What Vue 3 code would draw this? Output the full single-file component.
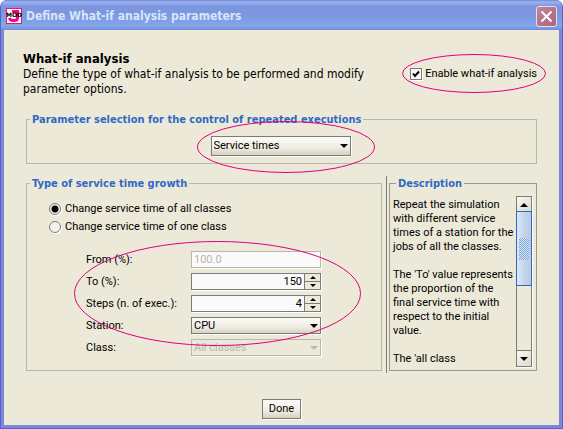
<script setup>
import { ref } from 'vue'

const enabled = ref(true)
const parameter = ref('Service times')
const scope = ref('all')
const from = ref('100.0')
const to = ref(150)
const steps = ref(4)
const station = ref('CPU')
const classes = ref('All classes')
const description = [
  'Repeat the simulation',
  'with different service',
  'times of a station for the',
  'jobs of all the classes.',
  '',
  "The 'To' value represents",
  'the proportion of the',
  'final service time with',
  'respect to the initial',
  'value.',
  '',
  "The 'all class",
].join('\n')
</script>

<template>
  <div class="window">
    <header class="titlebar">
      <svg class="logo" width="16" height="16" viewBox="0 0 16 16" aria-hidden="true">
        <rect x="0.5" y="0.5" width="15" height="15" fill="#fff" stroke="#f0147d" />
        <path d="M6 3.500h5.500v6q0 3-3 3H7q-3 0-3.500-2.500" fill="none" stroke="#f5087f" stroke-width="3" />
        <text class="logo-mod" x="8" y="9" text-anchor="middle">MOD</text>
      </svg>
      <span class="title">Define What-if analysis parameters</span>
      <button class="close" type="button" aria-label="Close">
        <svg width="19" height="19" viewBox="0 0 19 19"><path d="M4.500 4.500l10 10M14.500 4.500l-10 10" stroke="#fff" stroke-width="2" /></svg>
      </button>
    </header>

    <main class="content">
      <div class="intro">
        <div class="intro-text">
          <h1>What-if analysis</h1>
          <p>Define the type of what-if analysis to be performed and modify parameter options.</p>
        </div>
        <label class="enable">
          <input v-model="enabled" type="checkbox" />
          <span>Enable what-if analysis</span>
          <svg class="ring ring-enable" viewBox="0 0 144 39" aria-hidden="true"><ellipse cx="72" cy="19.5" rx="71.5" ry="19" /></svg>
        </label>
      </div>

      <fieldset class="group selection">
        <legend>Parameter selection for the control of repeated executions</legend>
        <div class="combo">
          <select v-model="parameter" aria-label="Parameter"><option>Service times</option></select>
          <svg class="arrow" width="8" height="4" viewBox="0 0 8 4"><path d="M0 0h8L4 4z" /></svg>
          <svg class="ring ring-parameter" viewBox="0 0 178 52" aria-hidden="true"><ellipse cx="89" cy="26" rx="88.5" ry="25.5" /></svg>
        </div>
      </fieldset>

      <div class="panes">
        <fieldset class="group growth">
          <legend>Type of service time growth</legend>
          <div class="radios">
            <label><input v-model="scope" type="radio" name="scope" value="all" />Change service time of all classes</label>
            <label><input v-model="scope" type="radio" name="scope" value="one" />Change service time of one class</label>
          </div>
          <div class="form">
            <label for="from">From (%):</label>
            <input id="from" v-model="from" class="field" type="text" disabled />
            <label for="to">To (%):</label>
            <div class="spinner">
              <input id="to" v-model.number="to" type="text" />
              <button type="button" aria-label="Increase to" @click="to++"><svg width="6" height="3" viewBox="0 0 6 3"><path d="M0 3h6L3 0z" /></svg></button>
              <button type="button" aria-label="Decrease to" @click="to--"><svg width="6" height="3" viewBox="0 0 6 3"><path d="M0 0h6L3 3z" /></svg></button>
            </div>
            <label for="steps">Steps (n. of exec.):</label>
            <div class="spinner">
              <input id="steps" v-model.number="steps" type="text" />
              <button type="button" aria-label="Increase steps" @click="steps++"><svg width="6" height="3" viewBox="0 0 6 3"><path d="M0 3h6L3 0z" /></svg></button>
              <button type="button" aria-label="Decrease steps" @click="steps--"><svg width="6" height="3" viewBox="0 0 6 3"><path d="M0 0h6L3 3z" /></svg></button>
            </div>
            <label for="station">Station:</label>
            <div class="combo small">
              <select id="station" v-model="station"><option>CPU</option></select>
              <svg class="arrow" width="8" height="4" viewBox="0 0 8 4"><path d="M0 0h8L4 4z" /></svg>
            </div>
            <label for="class">Class:</label>
            <div class="combo small off">
              <select id="class" v-model="classes" disabled><option>All classes</option></select>
              <svg class="arrow" width="8" height="4" viewBox="0 0 8 4"><path d="M0 0h8L4 4z" /></svg>
            </div>
            <svg class="ring ring-form" viewBox="0 0 287 105" aria-hidden="true"><ellipse cx="143.5" cy="52.5" rx="143" ry="52" /></svg>
          </div>
        </fieldset>

        <div class="side">
          <fieldset class="group about">
            <legend>Description</legend>
            <p>{{ description }}</p>
            <div class="scrollbar">
              <button type="button" aria-label="Scroll up"><svg width="8" height="4" viewBox="0 0 8 4"><path d="M0 4h8L4 0z" /></svg></button>
              <div class="track">
                <div class="thumb"><span class="grip"></span></div>
              </div>
              <button type="button" aria-label="Scroll down"><svg width="8" height="4" viewBox="0 0 8 4"><path d="M0 0h8L4 4z" /></svg></button>
            </div>
          </fieldset>
        </div>
      </div>

      <footer><button class="done" type="button">Done</button></footer>
    </main>
  </div>
</template>

<style>
body {
  margin: 0;
  background: #fff;
}
</style>

<style scoped>
* {
  box-sizing: border-box;
}
.window {
  display: flex;
  flex-direction: column;
  min-height: 100vh;
  border: solid #5a62c4;
  border-width: 0 1px 1px;
  border-radius: 7px 7px 0 0;
  background: #7a88dc;
  overflow: hidden;
  color: #000;
  font: 11px/14px Roboto, "DejaVu Sans Condensed", sans-serif;
}
input,
select,
button {
  font: inherit;
  color: inherit;
  margin: 0;
}
.titlebar {
  display: flex;
  align-items: center;
  height: 30px;
  padding: 2px 5px 0;
  background: linear-gradient(#6f86d8, #9cb4ee 2px, #7d95e0 6px, #7b97e0 14px, #82a6ea 26px, #7489d8);
}
.logo {
  margin-right: 4px;
}
.logo-mod {
  fill: #000;
  font: bold 6px "DejaVu Sans", sans-serif;
}
.title {
  flex: 1;
  color: #dae4fa;
  font: bold 12px/18px "DejaVu Sans Condensed", sans-serif;
}
.close {
  width: 21px;
  height: 21px;
  padding: 0;
  border: 1px solid #dbe1f8;
  border-radius: 3px;
  background: linear-gradient(135deg, #c0849a, #ae6478);
}
.close svg {
  display: block;
}
.content {
  flex: 1;
  display: flex;
  flex-direction: column;
  margin: 0 3px 3px;
  padding: 21px 22px 5px;
  background: #ece9d8;
}
.intro {
  display: flex;
  justify-content: space-between;
  margin-left: -3px;
}
.intro-text {
  width: 360px;
}
h1 {
  margin: 0;
  font: bold 13px/16px "DejaVu Sans Condensed", sans-serif;
}
p {
  margin: 0;
}
.intro p {
  font: 12px/15px "DejaVu Sans Condensed", sans-serif;
}
.enable {
  position: relative;
  display: flex;
  align-items: center;
  gap: 3px;
  align-self: flex-start;
  margin-top: 16px;
}
.enable input {
  appearance: none;
  width: 12px;
  height: 12px;
  border: 1px solid #7b7c78;
  background: #f8f8f6;
  box-shadow: 1px 1px #fff;
}
.enable input:checked {
  background: #f8f8f6 url("data:image/svg+xml,%3Csvg xmlns='http://www.w3.org/2000/svg' viewBox='0 0 10 10'%3E%3Cpath d='M2 4.500l2 2.500 4-4.500' fill='none' stroke='%23000' stroke-width='2'/%3E%3C/svg%3E");
}
.ring {
  position: absolute;
  fill: none;
  stroke: #e0007c;
  stroke-width: 1;
  pointer-events: none;
  z-index: 2;
}
.ring-enable {
  width: 144px;
  height: 39px;
  left: -8px;
  top: -13px;
}
.ring-parameter {
  width: 178px;
  height: 52px;
  left: -14px;
  top: -15px;
}
.ring-form {
  width: 287px;
  height: 105px;
  left: -12px;
  top: -10px;
}
.group {
  position: relative;
  min-width: 0;
  margin: 0;
  padding: 0;
  border: 1px solid #b8b8a8;
}
legend {
  margin-left: 3px;
  padding: 0 2px;
  background: #ece9d8;
  color: #2f69c5;
  font: bold 11px/15px "DejaVu Sans Condensed", sans-serif;
}
.selection {
  display: flex;
  justify-content: center;
  margin-top: 15px;
  padding: 9px 2px 7px 0;
}
.combo {
  position: relative;
  width: 140px;
  height: 20px;
}
.combo select {
  appearance: none;
  display: block;
  width: 100%;
  height: 100%;
  padding: 0 2px;
  border: 1px solid #7b7c78;
  border-radius: 0;
  outline: 0;
  background: linear-gradient(#fafaf8, #efede2 60%, #d5d2c2);
  box-shadow: 1px 1px #fff;
}
.combo.small {
  width: auto;
  height: 17px;
}
.combo.off select {
  opacity: 1;
  color: #b8b8a8;
  border-color: #b8b8a8;
  background: #ece9d8;
}
.arrow {
  position: absolute;
  right: 3px;
  top: 50%;
  margin-top: -2px;
}
.off .arrow {
  fill: #b8b8a8;
}
.panes {
  display: grid;
  grid-template-columns: 1fr 151px;
  gap: 4px;
  margin-top: 12px;
}
.growth {
  padding-bottom: 14px;
}
.radios {
  display: grid;
  gap: 4px;
  padding: 11px 0 0 22px;
}
.radios label {
  display: flex;
  align-items: center;
  gap: 4px;
}
.radios input {
  appearance: none;
  width: 12px;
  height: 12px;
  border: 1px solid #7b7c78;
  border-radius: 50%;
  background: #f4f2e8;
  box-shadow: 1px 1px #fff;
}
.radios input:checked {
  background: radial-gradient(circle, #000 3px, #f4f2e8 4px);
}
.form {
  position: relative;
  display: grid;
  grid-template-columns: 105px 130px;
  grid-auto-rows: 17px;
  gap: 5px 0;
  align-items: center;
  margin: 17px 0 0 59px;
}
.field,
.spinner {
  width: 100%;
  height: 17px;
  border: 1px solid #7b7c78;
  background: #fafafa;
  box-shadow: 1px 1px #fff;
}
.field {
  padding: 0 2px;
}
.field:disabled {
  border-color: #b8b8a8;
  color: #b8b8a8;
}
.spinner {
  display: grid;
  grid-template-columns: 1fr 16px;
  grid-template-rows: 8px 7px;
}
.spinner input {
  grid-row: 1 / 3;
  min-width: 0;
  padding: 0 2px;
  border: 0;
  outline: 0;
  background: none;
  text-align: right;
}
.spinner button {
  display: grid;
  place-items: center;
  padding: 0;
  border: 0;
  border-left: 1px solid #7b7c78;
  background: #eceade;
}
.spinner button:nth-of-type(1) {
  border-bottom: 1px solid #7b7c78;
}
.side {
  display: grid;
  margin-bottom: -2px;
  padding: 0 0 2px 2px;
  border-left: 1px solid #7b7c78;
}
.about {
  display: flex;
  justify-content: space-between;
  padding: 5px 4px 3px 3px;
  border-color: #999990;
}
.about p {
  flex: 1;
  width: 0;
  padding-top: 2px;
  white-space: pre;
}
.scrollbar {
  display: flex;
  flex-direction: column;
  width: 16px;
  border: 1px solid #7b7c78;
  box-shadow: 1px 1px #fff;
}
.scrollbar button {
  display: grid;
  place-items: center;
  height: 15px;
  padding: 0;
  border: 0;
  background: linear-gradient(135deg, #f8f8f4, #dddacb);
}
.track {
  flex: 1;
  border-bottom: 1px solid #7b7c78;
}
.thumb {
  display: grid;
  place-items: center;
  height: 75px;
  margin: -1px -1px 0;
  border: 1px solid #2f69c5;
  background: linear-gradient(90deg, #dfe9f5, #c3d5ea 50%, #b6cbe4);
}
.grip {
  width: 10px;
  height: 22px;
  background: repeating-conic-gradient(#7fa5dc 0 25%, #d8e6f6 0 50%) 0 0 / 2px 2px;
}
footer {
  display: flex;
  justify-content: center;
  margin-top: 28px;
}
.done {
  height: 20px;
  padding: 0 6px;
  border: 1px solid #7b7c78;
  background: linear-gradient(#fafaf8, #efede2 60%, #d5d2c2);
  box-shadow: 1px 1px #fff;
}
</style>
